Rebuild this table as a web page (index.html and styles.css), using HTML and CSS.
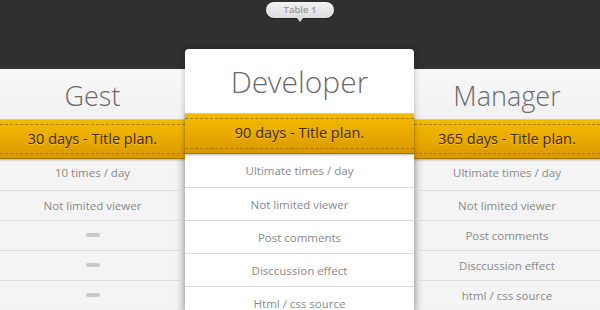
FILE: index.html
```html
<!DOCTYPE html>
<html>
<head>
<meta charset="utf-8">
<link rel="stylesheet" href="styles.css">
</head>
<body>
<div class="page">
  <div class="top">
    <div class="tip">Table 1</div>
  </div>
  <div class="table">
    <div class="col side">
      <div class="head">Gest</div>
      <div class="band">30 days - Title plan.</div>
      <div class="row first">10 times / day</div>
      <div class="row">Not limited viewer</div>
      <div class="row"><span class="dash"></span></div>
      <div class="row"><span class="dash"></span></div>
      <div class="row"><span class="dash"></span></div>
    </div>
    <div class="col main">
      <div class="head">Developer</div>
      <div class="band">90 days - Title plan.</div>
      <div class="row first">Ultimate times / day</div>
      <div class="row">Not limited viewer</div>
      <div class="row">Post comments</div>
      <div class="row">Disccussion effect</div>
      <div class="row">Html / css source</div>
    </div>
    <div class="col side right">
      <div class="head">Manager</div>
      <div class="band">365 days - Title plan.</div>
      <div class="row first">Ultimate times / day</div>
      <div class="row">Not limited viewer</div>
      <div class="row">Post comments</div>
      <div class="row">Disccussion effect</div>
      <div class="row">html / css source</div>
    </div>
  </div>
</div>
</body>
</html>
```
FILE: styles.css
```css
* { box-sizing: border-box; }
html, body { margin: 0; padding: 0; }
body {
  background: #303030;
  font-family: "Open Sans", "Liberation Sans", sans-serif;
  width: 600px;
  height: 310px;
  overflow: hidden;
}
.page { width: 600px; }
.top {
  height: 49px;
  display: flex;
  justify-content: center;
  padding-top: 2px;
}
.tip {
  position: relative;
  width: 68px;
  height: 16px;
  border-radius: 8px;
  background: linear-gradient(#f2f2f2, #dcdcdc);
  color: #9a9a9a;
  font-size: 9.5px;
  font-weight: 600;
  text-align: center;
  line-height: 16px;
  box-shadow: 0 1px 1px rgba(0,0,0,0.3);
}
.tip::after {
  content: "";
  position: absolute;
  left: 31px;
  bottom: -4px;
  border-left: 3px solid transparent;
  border-right: 3px solid transparent;
  border-top: 4px solid #dcdcdc;
}
.table {
  display: grid;
  grid-template-columns: 185px 229px 186px;
  align-items: start;
}
.col { text-align: center; }
.side {
  margin-top: 20px;
  background: #f4f4f4;
  height: 241px;
}
.side:first-child { box-shadow: inset -10px 0 10px -8px rgba(0,0,0,0.22); }
.side.right { box-shadow: inset 10px 0 10px -8px rgba(0,0,0,0.22); }
.main {
  position: relative;
  z-index: 2;
  background: #fff;
  border-radius: 4px 4px 0 0;
  height: 261px;
  box-shadow: 0 0 6px rgba(0,0,0,0.25);
}
.head {
  color: #6a6a6a;
  font-family: "Open Sans Light", "Open Sans", "Lato", sans-serif;
  font-weight: 300;
}
.side .head {
  height: 50px;
  font-size: 27px;
  line-height: 28px;
  padding-top: 13px;
  background: linear-gradient(#f8f8f8, #f1f1f1);
}
.main .head {
  height: 64px;
  font-size: 30px;
  line-height: 32px;
  padding-top: 17px;
}
.band {
  position: relative;
  background: linear-gradient(#f2bb00, #e8a900 55%, #d89800);
  color: #3f2800;
  font-size: 14.5px;
  text-shadow: 0 1px 0 rgba(255,220,110,0.5);
  border-top: 1px solid #f7cf4a;
  border-bottom: 1px solid #a87400;
  box-shadow: 0 1px 2px rgba(0,0,0,0.3);
}
.band::before {
  content: "";
  position: absolute;
  left: 0; right: 0;
  top: 4px; bottom: 4px;
  border-top: 1px dashed #b07a00;
  border-bottom: 1px dashed #b07a00;
}
.side .band { height: 40px; line-height: 38px; }
.main .band { height: 41px; line-height: 38px; }
.row {
  font-size: 11.5px;
  color: #8a8a8a;
  border-bottom: 1px solid #dcdcdc;
  display: flex;
  align-items: center;
  justify-content: center;
}
.side .row { height: 30px; padding-bottom: 1px; }
.side .row.first { height: 32px; padding-bottom: 4px; }
.main .row { height: 33px; }
.main .row.first { height: 34px; }
.dash {
  display: block;
  width: 14px;
  height: 4px;
  border-radius: 2px;
  background: #c9c9c9;
}
```
